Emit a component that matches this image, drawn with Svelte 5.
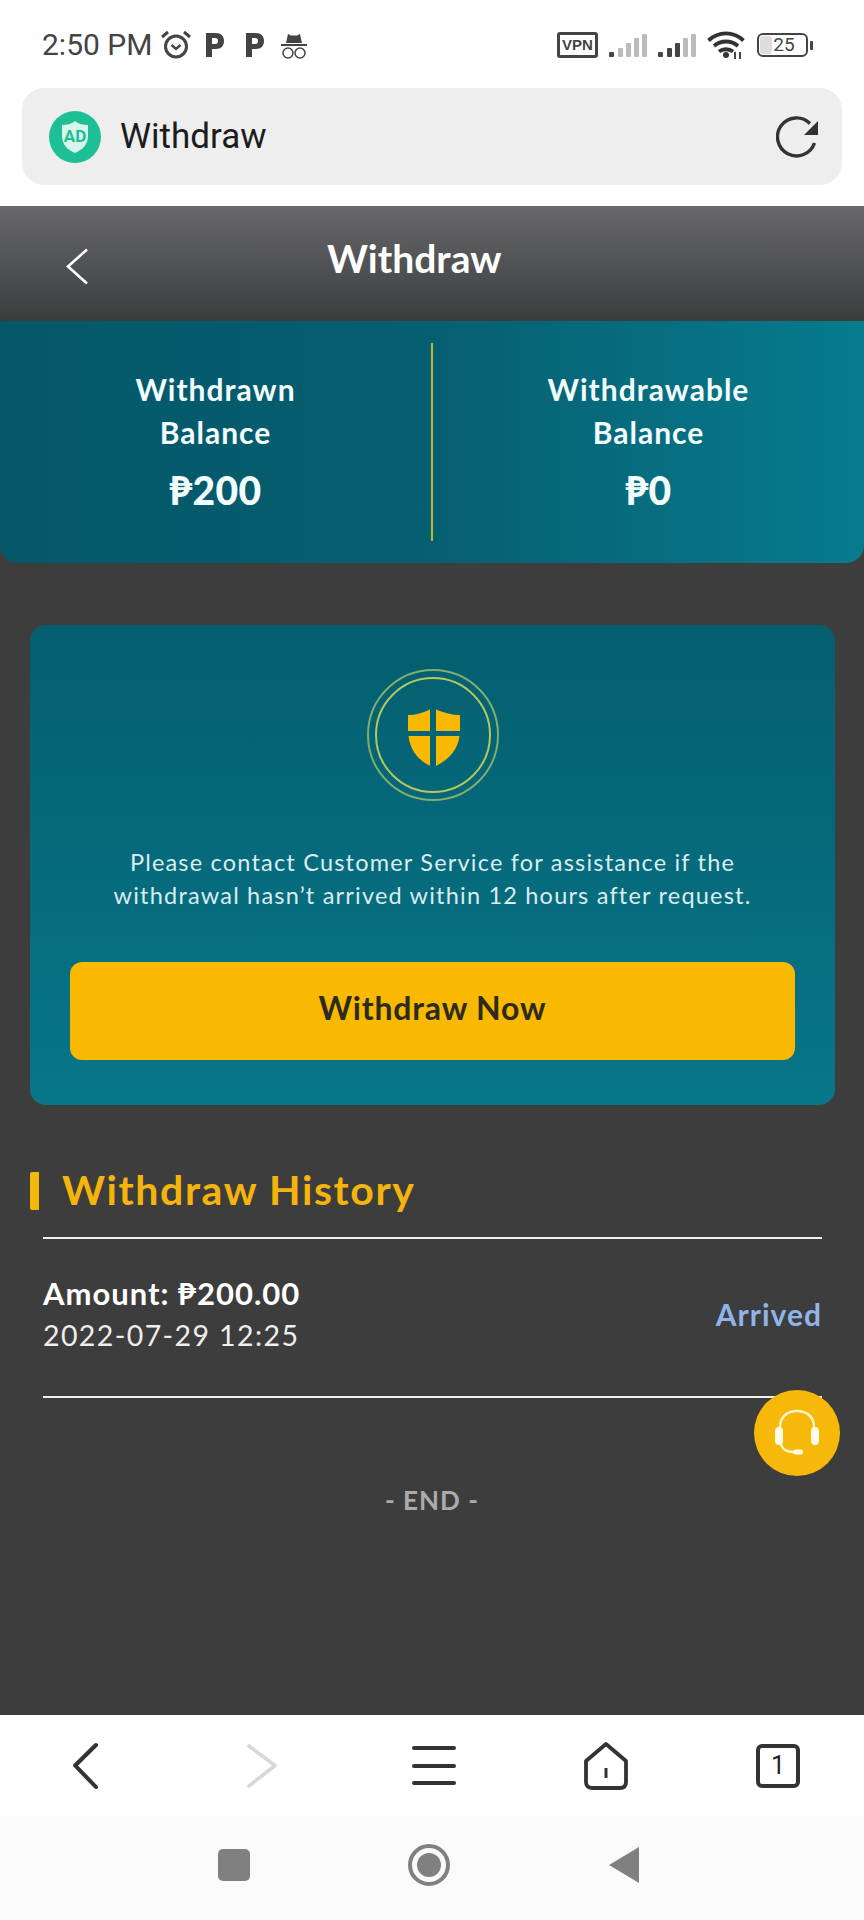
<script>
  let balances = [
    { label: ["Withdrawn", "Balance"], value: "₱200" },
    { label: ["Withdrawable", "Balance"], value: "₱0" }
  ];
</script>

<div class="screen">
  <div class="status">
    <div class="status-left">
      <span class="time">2:50 PM</span>
      <svg class="alarm" viewBox="0 0 32 30" width="32" height="30" fill="none" stroke="#444">
        <circle cx="16" cy="16.5" r="10.5" stroke-width="3" />
        <path d="M11.5 15l4.5 4 4.5-4" stroke-width="2.4" />
        <path d="M2 7l6-5M30 7l-6-5" stroke-width="3" />
      </svg>
      <svg class="park first" viewBox="0 0 20 26" width="20" height="26">
        <path fill="#444" fill-rule="evenodd" d="M1 1h10c5 0 8 3 8 8s-3 8-8 8H7v8H1zM7 6v6h3c2 0 3-1 3-3s-1-3-3-3z" />
      </svg>
      <svg class="park" viewBox="0 0 20 26" width="20" height="26">
        <path fill="#444" fill-rule="evenodd" d="M1 1h10c5 0 8 3 8 8s-3 8-8 8H7v8H1zM7 6v6h3c2 0 3-1 3-3s-1-3-3-3z" />
      </svg>
      <svg class="spy" viewBox="0 0 28 28" width="28" height="28" fill="none" stroke="#444">
        <path fill="#444" stroke="none" d="M6 12l2-9 3 1.500h6l3-1.500 2 9z" />
        <path d="M1 14h26" stroke-width="2" />
        <circle cx="8" cy="22" r="5" stroke-width="1.500" />
        <circle cx="20" cy="22" r="5" stroke-width="1.500" />
      </svg>
    </div>
    <div class="status-right">
      <span class="vpn">VPN</span>
      <svg class="signal" viewBox="0 0 39 25" width="39" height="25">
        <rect x="0" y="19" width="5" height="5" rx="1" fill="#444" />
        <rect x="9" y="15" width="5" height="9" rx="1" fill="#bbb" />
        <rect x="17" y="10" width="5" height="14" rx="1" fill="#bbb" />
        <rect x="25" y="5" width="5" height="19" rx="1" fill="#bbb" />
        <rect x="33" y="1" width="5" height="23" rx="1" fill="#bbb" />
      </svg>
      <svg class="signal" viewBox="0 0 39 25" width="39" height="25">
        <rect x="0" y="19" width="5" height="5" rx="1" fill="#444" />
        <rect x="9" y="15" width="5" height="9" rx="1" fill="#444" />
        <rect x="17" y="10" width="5" height="14" rx="1" fill="#444" />
        <rect x="25" y="5" width="5" height="19" rx="1" fill="#bbb" />
        <rect x="33" y="1" width="5" height="23" rx="1" fill="#bbb" />
      </svg>
      <svg class="wifi" viewBox="0 0 38 28" width="38" height="28" fill="none" stroke="#333" stroke-width="3.800">
        <path d="M1.500 9.500c10-9.500 25-9.500 35 0" />
        <path d="M7 15c7-6 17-6 24 0" />
        <path d="M12 20.500c4-3 10-3 14 0" />
        <circle cx="19" cy="24" r="3" fill="#333" stroke="none" />
        <path d="M28 21v7M33 21v7" stroke-width="1.800" />
      </svg>
      <div class="battery"><span class="charge"></span><span>25</span></div>
      <span class="nub"></span>
    </div>
  </div>

  <div class="address">
    <svg viewBox="0 0 52 52" width="52" height="52">
      <circle cx="26" cy="26" r="26" fill="#1dbf94" />
      <path d="M26 10c4 3 8 4 13 4v11c0 9-6 14-13 17-7-3-13-8-13-17V14c5 0 9-1 13-4z" fill="#d9f4ec" />
      <text x="26" y="31" text-anchor="middle" class="ad">AD</text>
    </svg>
    <span class="address-text">Withdraw</span>
    <svg class="reload" viewBox="0 0 44 44" width="44" height="44" fill="none">
      <path d="M38.500 28A19 19 0 1 1 34 8.500" stroke="#333" stroke-width="3.400" />
      <path d="M42 6v14H28z" fill="#333" />
    </svg>
  </div>

  <header class="top">
    <svg class="back" viewBox="0 0 24 37" width="24" height="37" fill="none" stroke="#fff" stroke-width="2.600">
      <path d="M22 1.500L3 18.500l19 17" />
    </svg>
    <h1>Withdraw</h1>
  </header>

  <main>
    <section class="balances">
      {#each balances as b, i}
        {#if i == 1}<span class="divider"></span>{/if}
        <div class="balance">
          <p>{b.label[0]}</p>
          <p>{b.label[1]}</p>
          <strong>{b.value}</strong>
        </div>
      {/each}
    </section>

    <section class="card">
      <div class="rings">
        <svg viewBox="0 0 132 132" width="132" height="132" fill="none">
          <circle cx="66" cy="66" r="65" stroke="#7fae6f" stroke-width="2" />
          <circle cx="66" cy="66" r="57" stroke="#b4c85e" stroke-width="2" />
          <path fill="#f8b900" d="M63 40.500V62H41V46c8 0 15-2 22-5.500z" />
          <path fill="#f8b900" d="M69 40.500c8 3.500 16 5.500 24 5.500v16H69z" />
          <path fill="#f8b900" d="M41.500 67H63v30C51 91 43 81 41.500 67z" />
          <path fill="#f8b900" d="M69 67h23.500C91 81 81 91 69 97z" />
        </svg>
      </div>
      <p class="notice">Please contact Customer Service for assistance if the<br />withdrawal hasn’t arrived within 12 hours after request.</p>
      <button>Withdraw Now</button>
    </section>

    <h2>Withdraw History</h2>

    <div class="record">
      <div>
        <p class="amount">Amount: ₱200.00</p>
        <p class="date">2022-07-29 12:25</p>
      </div>
      <span class="state">Arrived</span>
    </div>

    <p class="end">- END -</p>

    <button class="support" aria-label="Support">
      <svg viewBox="0 0 50 50" width="50" height="50" fill="none">
        <path d="M8 24V19C8 9 15 3 25 3s17 6 17 16v5" stroke="#fff3c8" stroke-width="2.400" />
        <rect x="3" y="19" width="8" height="18" rx="4" fill="#fffbe6" />
        <rect x="39" y="19" width="8" height="18" rx="4" fill="#fffbe6" />
        <path d="M9 36c1 5 5 8 13 8" stroke="#fff3c8" stroke-width="2.400" />
        <rect x="21" y="41.500" width="10" height="5" rx="2.500" fill="#fffbe6" />
      </svg>
    </button>
  </main>

  <nav class="toolbar">
    <svg viewBox="0 0 44 48" width="44" height="48" fill="none" stroke="#333" stroke-width="4" stroke-linecap="round" stroke-linejoin="round">
      <path d="M24 3L4 23.500 24 45" transform="translate(4 0) scale(1.040 1)" />
    </svg>
    <svg viewBox="0 0 44 48" width="44" height="48" fill="none" stroke="#d8d8d8" stroke-width="3.600" stroke-linecap="round" stroke-linejoin="round">
      <path d="M14 4l26 19.500L14 44" transform="translate(-4 0)" />
    </svg>
    <svg viewBox="0 0 44 48" width="44" height="48" fill="none" stroke="#333" stroke-width="4" stroke-linecap="round">
      <path d="M2 6h40M2 24h40M2 41h40" />
    </svg>
    <svg viewBox="0 0 44 48" width="44" height="48" fill="none" stroke="#333" stroke-width="3.800" stroke-linejoin="round">
      <path d="M22 2L42 19v21c0 4-2 6-6 6H8c-4 0-6-2-6-6V19z" />
      <path d="M22 26v10" stroke-width="3" />
    </svg>
    <div class="tabs">1</div>
  </nav>

  <nav class="system">
    <span class="square"></span>
    <span class="circle"><span></span></span>
    <svg viewBox="0 0 30 36" width="30" height="36"><path fill="#808080" d="M30 0v36L0 18z" /></svg>
  </nav>
</div>

<style>
  :global(body) {
    margin: 0;
    background: #fff;
  }

  .screen {
    width: 864px;
    height: 1920px;
    display: flex;
    flex-direction: column;
    font-family: Lato, "Liberation Sans", sans-serif;
    overflow: hidden;
  }

  p, h1, h2 {
    margin: 0;
  }

  .status {
    height: 88px;
    flex: none;
    box-sizing: border-box;
    padding: 30px 51px 0 42px;
    display: flex;
    justify-content: space-between;
    align-items: flex-start;
    font-family: Roboto, sans-serif;
    color: #444;
  }

  .status-left, .status-right {
    display: flex;
    align-items: center;
    height: 30px;
  }

  .time {
    font-size: 30px;
    line-height: 32px;
    width: 118px;
    white-space: nowrap;
  }

  .park {
    margin-left: 20px;
  }

  .park.first {
    margin-left: 13px;
  }

  .spy {
    margin-left: 15px;
  }

  .vpn {
    border: 3px solid #444;
    border-radius: 3px;
    width: 41px;
    height: 26px;
    box-sizing: border-box;
    font: bold 15px/20px "Liberation Sans", sans-serif;
    text-align: center;
  }

  .signal {
    margin-left: 11px;
  }

  .signal + .signal {
    margin-left: 10px;
  }

  .wifi {
    margin-left: 10px;
  }

  .battery {
    margin-left: 12px;
    width: 51px;
    height: 24px;
    box-sizing: border-box;
    border: 2px solid #444;
    border-radius: 6px;
    position: relative;
    text-align: center;
    font-size: 19px;
    line-height: 20px;
    padding-left: 3px;
  }

  .charge {
    position: absolute;
    left: 1px;
    top: 1px;
    bottom: 1px;
    width: 12px;
    background: #ddd;
    border-radius: 3px;
  }

  .battery span:last-child {
    position: relative;
  }

  .nub {
    width: 3px;
    height: 9px;
    margin-left: 2px;
    background: #444;
    border-radius: 1px;
  }

  .address {
    margin: 0 22px;
    height: 97px;
    flex: none;
    background: #eee;
    border-radius: 22px;
    display: flex;
    align-items: center;
    padding: 0 22px 0 27px;
  }

  .ad {
    font: bold 17px Roboto, sans-serif;
    fill: #1dbf94;
  }

  .address-text {
    margin-left: 19px;
    font: 35px Roboto, sans-serif;
    color: #1c1c1c;
    flex: 1;
  }

  .top {
    margin-top: 21px;
    height: 115px;
    flex: none;
    background: linear-gradient(#68686c, #3b3d3d);
    display: flex;
    align-items: flex-start;
  }

  .back {
    margin: 42px 0 0 65px;
  }

  .top h1 {
    margin: 29px 0 0 238px;
    font-size: 39px;
    line-height: 46px;
    font-weight: 700;
    color: #fff;
  }

  main {
    height: 1394px;
    flex: none;
    background: #3e3d3d;
    position: relative;
  }

  .balances {
    height: 242px;
    background: linear-gradient(90deg, #045769, #065f70 50%, #077b8e);
    border-radius: 0 0 18px 18px;
    display: flex;
    align-items: center;
  }

  .divider {
    width: 2px;
    height: 198px;
    flex: none;
    background: #c4b833;
  }

  .balance {
    flex: 1;
    margin-top: -4px;
    text-align: center;
    color: #f2fcfc;
    font-size: 30px;
    font-weight: 700;
    line-height: 43px;
    letter-spacing: 1px;
  }

  .balance strong {
    display: block;
    margin-top: 14px;
    font-size: 39px;
    line-height: 44px;
    letter-spacing: 0.4px;
  }

  .card {
    margin: 62px 29px 0 30px;
    height: 480px;
    box-sizing: border-box;
    background: linear-gradient(#045e6f, #077789);
    border-radius: 16px;
    padding-top: 44px;
    text-align: center;
  }

  .rings {
    height: 132px;
  }

  .notice {
    margin-top: 45px;
    color: #dcecef;
    font-size: 23.500px;
    line-height: 33px;
    letter-spacing: 1.2px;
    white-space: nowrap;
  }

  .card button {
    display: block;
    margin: 50px 40px 0;
    width: 725px;
    height: 98px;
    padding: 0 0 8px;
    border: none;
    border-radius: 12px;
    background: #f8b900;
    color: #2d2a1e;
    font: 700 32px Lato, sans-serif;
    letter-spacing: 0.8px;
  }

  h2 {
    margin: 67px 0 0 30px;
    padding-left: 23px;
    height: 38px;
    border-left: 9px solid #f4b70c;
    border-radius: 2px;
    font-size: 41px;
    line-height: 36px;
    font-weight: 700;
    color: #f4b40c;
    letter-spacing: 1.6px;
    white-space: nowrap;
  }

  .record {
    margin: 27px 42px 0 43px;
    height: 161px;
    box-sizing: border-box;
    border-top: 2px solid #f0f0f0;
    border-bottom: 2px solid #f0f0f0;
    padding-bottom: 7px;
    display: flex;
    justify-content: space-between;
    align-items: center;
  }

  .amount {
    font-size: 31px;
    line-height: 42px;
    font-weight: 700;
    color: #fff;
    letter-spacing: 1px;
  }

  .date {
    font-size: 28.500px;
    line-height: 42px;
    color: #eee;
    letter-spacing: 1.4px;
  }

  .state {
    font-size: 30px;
    font-weight: 700;
    color: #8fb4ea;
    letter-spacing: 1px;
  }

  .end {
    margin-top: 84px;
    text-align: center;
    color: #ababab;
    font-size: 26px;
    line-height: 36px;
    font-weight: 700;
    letter-spacing: 1px;
  }

  .support {
    position: absolute;
    left: 754px;
    top: 1069px;
    width: 86px;
    height: 86px;
    padding: 0;
    border: none;
    border-radius: 50%;
    background: #f6b90a;
    display: flex;
    align-items: center;
    justify-content: center;
  }

  .toolbar {
    height: 101px;
    flex: none;
    background: #fff;
    box-sizing: border-box;
    padding: 0 64px 0 67px;
    display: flex;
    justify-content: space-between;
    align-items: center;
  }

  .tabs {
    width: 44px;
    height: 44px;
    box-sizing: border-box;
    border: 4px solid #333;
    border-radius: 6px;
    text-align: center;
    font: 25px/36px Roboto, sans-serif;
    color: #222;
  }

  .system {
    flex: 1;
    background: #fafafa;
    display: flex;
    align-items: center;
    padding: 0 0 6px 218px;
  }

  .square {
    width: 32px;
    height: 32px;
    background: #808080;
    border-radius: 5px;
  }

  .circle {
    margin-left: 158px;
    width: 42px;
    height: 42px;
    box-sizing: border-box;
    border: 4px solid #808080;
    border-radius: 50%;
    display: flex;
    align-items: center;
    justify-content: center;
  }

  .circle span {
    width: 24px;
    height: 24px;
    border-radius: 50%;
    background: #808080;
  }

  .system svg {
    margin-left: 159px;
  }
</style>
